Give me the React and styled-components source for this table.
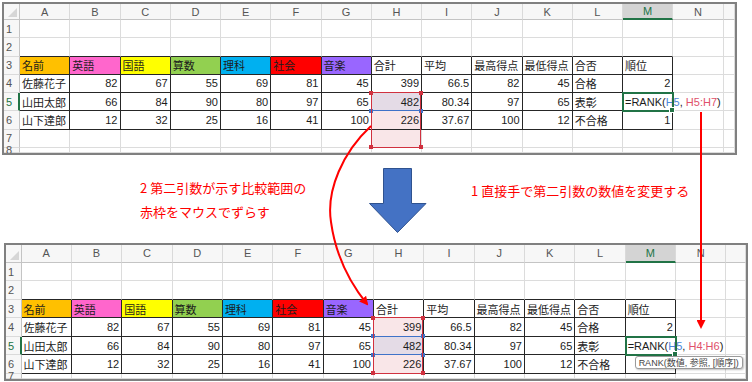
import React from "react";
import styled, { createGlobalStyle } from "styled-components";

const GlobalStyle = createGlobalStyle`
  html, body {
    margin: 0;
    padding: 0;
    background: #fff;
  }
  body {
    font-family: "Liberation Sans", "Noto Sans CJK JP", sans-serif;
  }
`;

const GREEN = "#217346";
const REF_BLUE = "#3f72c8";
const REF_RED = "#d0313f";
const TEXT_BLUE = "#4a86d8";
const TEXT_RED = "#e0506a";

const LETTERS = ["A", "B", "C", "D", "E", "F", "G", "H", "I", "J", "K", "L", "M", "N"];
const HEADS = ["名前", "英語", "国語", "算数", "理科", "社会", "音楽", "合計", "平均", "最高得点", "最低得点", "合否", "順位"];
const HEAD_COLORS = ["#ffc000", "#ff66cc", "#ffff00", "#92d050", "#00b0f0", "#ff0000", "#9966ff"];
const ROWS = [
  ["佐藤花子", 82, 67, 55, 69, 81, 45, 399, 66.5, 82, 45, "合格", 2],
  ["山田太郎", 66, 84, 90, 80, 97, 65, 482, 80.34, 97, 65, "表彰", null],
  ["山下達郎", 12, 32, 25, 16, 41, 100, 226, 37.67, 100, 12, "不合格", 1],
];

const TOP = { rowHeadW: 16, colW: 50.25, lastW: 11, headH: 16, rowH: 18.25, fullRows: 7, lastH: 5 };
const BOTTOM = { rowHeadW: 15.5, colW: 50.35, lastW: 19.6, headH: 18, rowH: 18.5, fullRows: 6, lastH: 5 };

const Sheet = ({ dims, range, formulaRange, tip, className }) => {
  const { rowHeadW, colW, lastW, headH, rowH, fullRows, lastH } = dims;
  const rangeEnd = range.start + range.count - 1;

  const header = [<Corner key="corner" />];
  LETTERS.forEach((l, i) => {
    header.push(
      <ColHead key={l} $active={i === 12}>
        {l}
      </ColHead>
    );
  });
  header.push(<ColHead key="rest" />);

  const body = [];
  for (let r = 1; r <= fullRows + 1; r++) {
    body.push(
      <RowHead key={`h${r}`} $active={r === 5}>
        {r}
      </RowHead>
    );
    for (let c = 1; c <= 15; c++) {
      const inTable = r >= 3 && r <= 6 && c <= 13;
      const dark = {
        $dr: inTable,
        $db: inTable || (r === 2 && c <= 13),
      };
      const hasTip = tip && c === 13 && r === 6;
      let text = null;
      let bg = null;
      if (r === 3 && c <= 13) {
        text = HEADS[c - 1];
        bg = HEAD_COLORS[c - 1];
      } else if (r >= 4 && r <= 6 && c <= 13 && !hasTip) {
        text = ROWS[r - 4][c - 1];
      }
      const num = typeof text === "number";
      const selected = c === 8 && r >= range.start && r <= rangeEnd;
      if (selected) bg = r === 5 ? "#e4dbe6" : "#f9e6e8";
      const key = `${r}-${c}`;

      if (c === 13 && r === 5) {
        body.push(
          <ActiveCell key={key} {...dark}>
            <Formula>
              =RANK(<Ref $c={TEXT_BLUE}>H5</Ref>, <Ref $c={TEXT_RED}>{formulaRange}</Ref>)
            </Formula>
          </ActiveCell>
        );
        continue;
      }

      const anchor = (c === 8 && (r === range.start || r === 5)) || hasTip;
      body.push(
        <Cell key={key} $bg={bg} $num={num} $anchor={anchor} {...dark}>
          {text}
          {c === 8 && r === 5 && (
            <RefBox $color={REF_BLUE} $h={rowH + 1} $z={2}>
              <Handle $pos="tl" $color={REF_BLUE} />
              <Handle $pos="tr" $color={REF_BLUE} />
              <Handle $pos="bl" $color={REF_BLUE} />
              <Handle $pos="br" $color={REF_BLUE} />
            </RefBox>
          )}
          {c === 8 && r === range.start && (
            <RefBox $color={REF_RED} $h={range.count * rowH + 1} $z={3}>
              <Handle $pos="tl" $color={REF_RED} />
              <Handle $pos="tr" $color={REF_RED} />
              <Handle $pos="bl" $color={REF_RED} />
              <Handle $pos="br" $color={REF_RED} />
            </RefBox>
          )}
          {hasTip && <Tooltip>RANK(数値, 参照, [順序])</Tooltip>}
        </Cell>
      );
    }
  }

  return (
    <Frame className={className}>
      <Grid
        $cols={`${rowHeadW}px repeat(14, ${colW}px) ${lastW}px`}
        $rows={`${headH}px repeat(${fullRows}, ${rowH}px) ${lastH}px`}
      >
        {header}
        {body}
      </Grid>
    </Frame>
  );
};

const DownArrow = () => (
  <ArrowSvg width="58" height="66" viewBox="0 0 58 66">
    <path d="M14.5 0.5 H42.5 V35.5 H57 L28.5 64.5 L0.5 35.5 H14.5 Z" fill="#4472c4" stroke="#2f528f" strokeWidth="1" />
  </ArrowSvg>
);

const Annotations = () => (
  <Overlay width="752" height="382" viewBox="0 0 752 382">
    <defs>
      <marker id="tip" markerWidth="9" markerHeight="9" refX="7" refY="4.5" orient="auto" markerUnits="userSpaceOnUse">
        <path d="M0 0 L9 4.5 L0 9 Z" fill="#ff0000" />
      </marker>
    </defs>
    <path
      d="M371 126 C343 152, 326 190, 331 222 C336 258, 350 283, 367 304"
      fill="none"
      stroke="#ff0000"
      strokeWidth="2"
      markerEnd="url(#tip)"
    />
    <path d="M701 112 L701 327" fill="none" stroke="#ff0000" strokeWidth="2" markerEnd="url(#tip)" />
  </Overlay>
);

const App = () => (
  <>
    <GlobalStyle />
    <Page>
      <TopSheet dims={TOP} range={{ start: 5, count: 3 }} formulaRange="H5:H7" />
      <Middle>
        <NoteLeft>
          2 第二引数が示す比較範囲の
          <br />
          赤枠をマウスでずらす
        </NoteLeft>
        <DownArrow />
        <NoteRight>1 直接手で第二引数の数値を変更する</NoteRight>
      </Middle>
      <BottomSheet dims={BOTTOM} range={{ start: 4, count: 3 }} formulaRange="H4:H6" tip />
      <Annotations />
    </Page>
  </>
);

const Page = styled.div`
  position: relative;
  width: 752px;
  height: 382px;
  overflow: hidden;
  background: #fff;
`;

const Frame = styled.div`
  width: fit-content;
  border: 2px solid #808080;
  background: #fff;
  overflow: hidden;
`;

const TopSheet = styled(Sheet)`
  margin: 2px 0 0 2px;
`;

const BottomSheet = styled(Sheet)`
  margin: 0 0 0 4px;
`;

const Grid = styled.div`
  display: grid;
  grid-template-columns: ${(p) => p.$cols};
  grid-template-rows: ${(p) => p.$rows};
  font-size: 11px;
  color: #1c1c1c;
`;

const Corner = styled.div`
  position: relative;
  box-sizing: border-box;
  background: #f7f7f7;
  border-right: 1px solid #c4c4c4;
  border-bottom: 1px solid #c4c4c4;
  &::after {
    content: "";
    position: absolute;
    right: 2px;
    bottom: 2px;
    border-left: 9px solid transparent;
    border-bottom: 9px solid #d6d6d6;
  }
`;

const ColHead = styled.div`
  box-sizing: border-box;
  display: flex;
  align-items: center;
  justify-content: center;
  background: ${(p) => (p.$active ? "#d4d4d4" : "#f7f7f7")};
  border-right: 1px solid #dadada;
  border-bottom: ${(p) => (p.$active ? `2px solid ${GREEN}` : "1px solid #c4c4c4")};
  color: ${(p) => (p.$active ? GREEN : "#555")};
  font-size: 11px;
`;

const RowHead = styled.div`
  box-sizing: border-box;
  display: flex;
  align-items: center;
  padding-left: 2px;
  background: #f7f7f7;
  border-bottom: 1px solid #dadada;
  border-right: ${(p) => (p.$active ? `2px solid ${GREEN}` : "1px solid #c4c4c4")};
  color: ${(p) => (p.$active ? GREEN : "#555")};
  font-size: 11px;
`;

const Cell = styled.div`
  box-sizing: border-box;
  display: flex;
  align-items: center;
  justify-content: ${(p) => (p.$num ? "flex-end" : "flex-start")};
  padding: 0 2px;
  white-space: nowrap;
  background: ${(p) => p.$bg || "transparent"};
  border-right: 1px solid ${(p) => (p.$dr ? "#262626" : "#dcdcdc")};
  border-bottom: 1px solid ${(p) => (p.$db ? "#262626" : "#dcdcdc")};
  position: ${(p) => (p.$anchor ? "relative" : "static")};
`;

const ActiveCell = styled(Cell)`
  position: relative;
  z-index: 1;
  overflow: visible;
  outline: 2px solid ${GREEN};
  outline-offset: -1px;
  &::after {
    content: "";
    position: absolute;
    right: -3px;
    bottom: -3px;
    width: 4px;
    height: 4px;
    background: ${GREEN};
    border: 1px solid #fff;
  }
`;

const Formula = styled.span`
  white-space: pre;
  font-size: 11px;
  color: #1c1c1c;
`;

const Ref = styled.span`
  color: ${(p) => p.$c};
`;

const RefBox = styled.div`
  position: absolute;
  left: -1px;
  top: -1px;
  width: calc(100% + 1px);
  height: ${(p) => p.$h}px;
  box-sizing: border-box;
  border: 1px solid ${(p) => p.$color};
  z-index: ${(p) => p.$z};
  pointer-events: none;
`;

const Handle = styled.span`
  position: absolute;
  width: 4px;
  height: 4px;
  background: ${(p) => p.$color};
  ${(p) => (p.$pos[0] === "t" ? "top: -2.5px;" : "bottom: -2.5px;")}
  ${(p) => (p.$pos[1] === "l" ? "left: -2.5px;" : "right: -2.5px;")}
`;

const Tooltip = styled.div`
  position: absolute;
  left: 9px;
  top: 1px;
  z-index: 4;
  height: 13px;
  box-sizing: border-box;
  display: flex;
  align-items: center;
  padding: 0 3px;
  background: #fff;
  border: 1px solid #9a9a9a;
  border-radius: 3px;
  box-shadow: 1px 1px 2px rgba(0, 0, 0, 0.25);
  font-family: "Liberation Sans", "Noto Sans CJK JP", sans-serif;
  font-size: 9px;
  color: #444;
  white-space: nowrap;
`;

const Middle = styled.div`
  display: flex;
  align-items: flex-start;
  height: 88px;
  padding-left: 140px;
  font-family: "Noto Sans CJK JP", sans-serif;
  color: #ff0000;
  font-size: 13px;
`;

const NoteLeft = styled.div`
  width: 229px;
  margin-top: 21px;
  line-height: 24px;
`;

const ArrowSvg = styled.svg`
  display: block;
  margin-top: 13px;
  flex: none;
`;

const NoteRight = styled.div`
  margin-left: 44px;
  margin-top: 26px;
  line-height: 20px;
`;

const Overlay = styled.svg`
  position: absolute;
  left: 0;
  top: 0;
  z-index: 10;
  pointer-events: none;
`;

export default App;
